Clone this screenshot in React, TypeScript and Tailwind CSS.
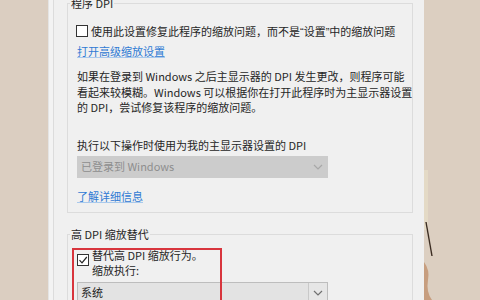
import React from "react";

function Chevron({ color }: { color: string }) {
  return (
    <svg width="10" height="6" viewBox="0 0 10 6">
      <path d="M1 1 L5 5 L9 1" fill="none" stroke={color} strokeWidth="1.2" />
    </svg>
  );
}

export default function App() {
  return (
    <div className="w-[480px] h-[300px] overflow-hidden bg-[#dccfc2] flex relative font-['Noto_Sans_CJK_SC','Noto_Sans',sans-serif] text-[11px] text-[#262626]">
      <div className="w-[48px] shrink-0 bg-[#dbcec1]" />
      <div className="w-[376px] shrink-0 bg-[#f0f0f0] border-l border-[#e4e4e4] flex">
        <div className="w-[4px] shrink-0 bg-[#f3f3f3]" />
        <div className="flex-1 border-l border-[#dcdcdc] pl-[13px] pr-[11px]">
          {/* Group 1 */}
          <div className="relative mt-[3px] border border-[#dcdcdc] pl-[9px] pt-[19px] pb-[8px]">
            <span className="absolute left-[2px] -top-[9px] bg-[#f0f0f0] px-[1px] leading-[16px] whitespace-nowrap">
              程序 DPI
            </span>
            <div className="flex items-center h-[16px] gap-[3px] -ml-[1px]">
              <div className="w-[12px] h-[12px] border border-[#333] bg-white shrink-0" />
              <span className="whitespace-nowrap leading-[16px]">
                使用此设置修复此程序的缩放问题，而不是
                <span className="font-['Liberation_Sans',sans-serif]">“</span>
                设置
                <span className="font-['Liberation_Sans',sans-serif]">”</span>
                中的缩放问题
              </span>
            </div>
            <div className="mt-[4px] h-[16px] leading-[16px] text-[#2f7ad4] underline decoration-[#a9c9ec] whitespace-nowrap">
              打开高级缩放设置
            </div>
            <div className="mt-[10px] leading-[15.5px] whitespace-nowrap">
              如果在登录到 Windows 之后主显示器的 DPI 发生更改，则程序可能
              <br />
              看起来较模糊。Windows 可以根据你在打开此程序时为主显示器设置
              <br />
              的 DPI，尝试修复该程序的缩放问题。
            </div>
            <div className="mt-[21px] h-[16px] leading-[16px] whitespace-nowrap">
              执行以下操作时使用为我的主显示器设置的 DPI
            </div>
            <div className="mt-[3px] w-[251px] h-[22px] bg-[#cccccc] flex items-center justify-between pl-[4px] pr-[5px] text-[#8e8e8e]">
              <span className="whitespace-nowrap">已登录到 Windows</span>
              <Chevron color="#a8a8a8" />
            </div>
            <div className="mt-[10px] h-[16px] leading-[16px] text-[#2f7ad4] underline decoration-[#a9c9ec] whitespace-nowrap">
              了解详细信息
            </div>
          </div>

          {/* Group 2 */}
          <div className="relative mt-[21px] border border-[#dcdcdc] pl-[9px] pt-[13px] pb-[8px]">
            <span className="absolute left-[2px] -top-[9px] bg-[#f0f0f0] px-[1px] leading-[16px] whitespace-nowrap">
              高 DPI 缩放替代
            </span>
            <div className="flex items-start gap-[3px]">
              <div className="mt-[6px] w-[12px] h-[12px] border border-[#333] bg-white shrink-0 flex items-center justify-center">
                <svg width="10" height="10" viewBox="0 0 10 10">
                  <path d="M1.5 5.2 L4 7.8 L8.8 2" fill="none" stroke="#222" strokeWidth="1.2" />
                </svg>
              </div>
              <div className="leading-[15px] whitespace-nowrap">
                替代高 DPI 缩放行为。
                <br />
                缩放执行:
              </div>
            </div>
            <div className="mt-[4px] w-[251px] h-[22px] border border-[#bdbdbd] bg-[#e6e6e6] flex">
              <div className="flex-1 border-r border-[#c9c9c9] bg-[#e3e3e3] flex items-center pl-[3px] text-[#222]">
                系统
              </div>
              <div className="w-[18px] flex items-center justify-center">
                <Chevron color="#707070" />
              </div>
            </div>
          </div>
        </div>
      </div>
      <div className="flex-1 bg-[#dccfc1]">
        <svg width="56" height="300" viewBox="0 0 56 300">
          <rect x="0" y="170" width="4" height="60" fill="#e4dac6" />
          <path d="M2 222 L8 256" stroke="#3b2c22" strokeWidth="1.4" fill="none" />
          <path d="M0 262 Q6 270 4 280 Q2 292 8 300 L0 300 Z" fill="#c79e7f" />
        </svg>
      </div>

      {/* red annotation box */}
      <div className="absolute left-[72px] top-[248px] w-[150px] h-[70px] border-2 border-[#d8353d]" />
    </div>
  );
}
